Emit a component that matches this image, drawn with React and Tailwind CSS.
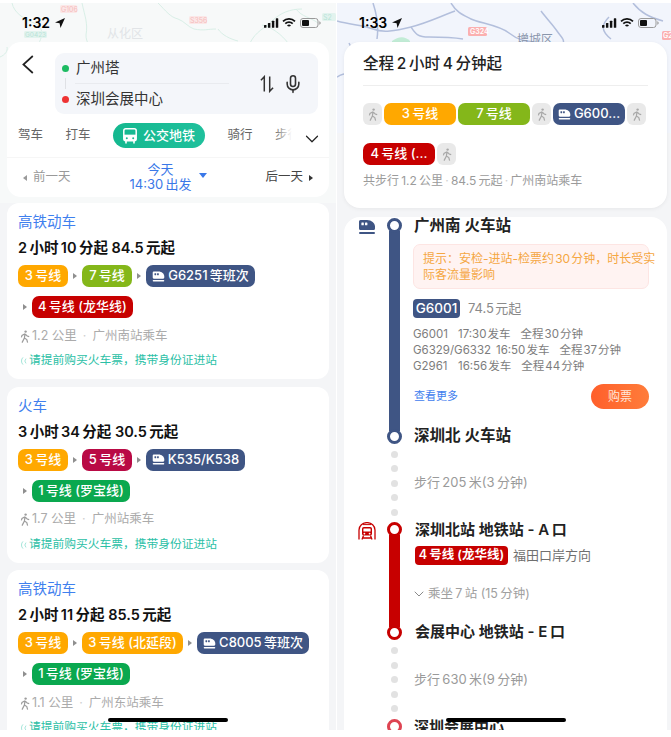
import { ChevronDown, Mic } from 'lucide-react'

const FONT = 'font-["Inter","Noto_Sans_CJK_SC",sans-serif]'

const ORANGE = 'bg-[#ffa800]'
const LIME = 'bg-[#84b71a]'
const NAVY = 'bg-[#3f5584]'
const RED = 'bg-[#c70000]'
const GREEN = 'bg-[#0aa84f]'
const CRIMSON = 'bg-[#b90a45]'

const ROUTES = [
  {
    title: '高铁动车',
    summary: '2\u2009小时\u200910\u2009分起\u00a084.5\u2009元起',
    rows: [
      [
        { label: '3\u2009号线', color: ORANGE, width: 'w-[50px]' },
        { label: '7\u2009号线', color: LIME, width: 'w-[50px]' },
        { label: 'G6251\u2009等班次', color: NAVY, width: 'w-[109px]', train: true },
      ],
      [{ label: '4\u2009号线 (龙华线)', color: RED, width: 'w-[101px]' }],
    ],
    info: '1.2 公里',
    station: '广州南站乘车',
  },
  {
    title: '火车',
    summary: '3\u2009小时\u200934\u2009分起\u00a030.5\u2009元起',
    rows: [
      [
        { label: '3\u2009号线', color: ORANGE, width: 'w-[50px]' },
        { label: '5\u2009号线', color: CRIMSON, width: 'w-[50px]' },
        { label: 'K535/K538', color: NAVY, width: 'w-[99px]', train: true },
      ],
      [{ label: '1\u2009号线 (罗宝线)', color: GREEN, width: 'w-[98px]' }],
    ],
    info: '1.7 公里',
    station: '广州站乘车',
  },
  {
    title: '高铁动车',
    summary: '2\u2009小时\u200911\u2009分起\u00a085.5\u2009元起',
    rows: [
      [
        { label: '3\u2009号线', color: ORANGE, width: 'w-[50px]' },
        { label: '3\u2009号线 (北延段)', color: ORANGE, width: 'w-[101px]' },
        { label: 'C8005\u2009等班次', color: NAVY, width: 'w-[112px]', train: true },
      ],
      [{ label: '1\u2009号线 (罗宝线)', color: GREEN, width: 'w-[98px]' }],
    ],
    info: '1.1 公里',
    station: '广州东站乘车',
  },
]

const TRAINS = [
  { no: 'G6001', width: 'w-[35px]', dep: '17:30\u200a发车', total: '全程\u200a30\u200a分钟' },
  { no: 'G6329/G6332', width: 'w-[73px]', dep: '16:50\u200a发车', total: '全程\u200a37\u200a分钟' },
  { no: 'G2961', width: 'w-[35px]', dep: '16:56\u200a发车', total: '全程\u200a44\u200a分钟' },
]

function LocationArrow() {
  return (
    <svg width="10" height="10" viewBox="0 0 10 10" className="ml-[5px]">
      <path d="M10 0 0 4.4l4.6.9.9 4.7z" fill="#111" />
    </svg>
  )
}

function StatusBar({ time, rightPad }) {
  return (
    <div className={`relative z-10 flex h-[39px] items-center pl-[22px] ${rightPad}`}>
      <span className="text-[14px] font-semibold text-black">{time}</span>
      <LocationArrow />
      <div className="ml-auto flex items-center gap-[3px]">
        <svg width="15" height="10" viewBox="0 0 16 10" fill="#111">
          <rect x="0" y="7" width="2.6" height="3" rx=".6" />
          <rect x="4.2" y="5" width="2.6" height="5" rx=".6" />
          <rect x="8.4" y="2.5" width="2.6" height="7.5" rx=".6" />
          <rect x="12.6" y="0" width="2.6" height="10" rx=".6" />
        </svg>
        <svg width="14" height="10" viewBox="0 0 14 10" fill="none" stroke="#111" strokeWidth="1.7">
          <path d="M1 3.4a8.5 8.5 0 0 1 12 0" />
          <path d="M3.3 5.7a5.2 5.2 0 0 1 7.4 0" />
          <path d="M5.6 8a2 2 0 0 1 2.8 0" />
        </svg>
        <svg width="21" height="10" viewBox="0 0 21 10" className="ml-[1px]">
          <rect x=".5" y=".5" width="17.5" height="9" rx="2.5" fill="none" stroke="#9a9a9a" />
          <rect x="2" y="2" width="7" height="6" rx="1" fill="#111" />
          <path d="M19.3 3.2c.9.3 1.4 1 1.4 1.8s-.5 1.5-1.4 1.8z" fill="#9a9a9a" />
        </svg>
      </div>
    </div>
  )
}

function HomeBar({ position }) {
  return <div className={`absolute top-[715px] z-20 h-[4px] w-[120px] rounded-full bg-black ${position}`} />
}

function TrainIcon({ size = 13, color = 'white', windows = '#3f5584' }) {
  return (
    <svg width={size} height={size} viewBox="0 0 18 16" className="shrink-0">
      <path d="M1 2.5A1.5 1.5 0 0 1 2.5 1H9c4.5 0 8 3 8 6.6V9.5A1.5 1.5 0 0 1 15.5 11h-13A1.5 1.5 0 0 1 1 9.5z" fill={color} />
      <rect x="3.4" y="3.4" width="2.4" height="2.8" rx=".5" fill={windows} />
      <rect x="7" y="3.4" width="2.4" height="2.8" rx=".5" fill={windows} />
      <rect x="1" y="13" width="16" height="2" rx="1" fill={color} />
    </svg>
  )
}

function SubwayIcon() {
  return (
    <svg width="18" height="18" viewBox="0 0 18 18" fill="none" stroke="#c70000" strokeWidth="1.3">
      <path d="M1 17.5V8a8 7.4 0 0 1 16 0v9.5" />
      <path d="M5 2.6h8" strokeWidth="1" />
      <rect x="4" y="5" width="10" height="8.5" rx="1.8" fill="#c70000" stroke="none" />
      <rect x="5.4" y="6.4" width="7.2" height="3" rx=".5" fill="white" stroke="none" />
      <circle cx="6.4" cy="11.6" r=".9" fill="white" stroke="none" />
      <circle cx="11.6" cy="11.6" r=".9" fill="white" stroke="none" />
      <path d="M5.5 13.5 4 17.5M12.5 13.5l1.5 4M4.5 16h9" />
    </svg>
  )
}

function Walker({ color = '#a8a8a8', className = '' }) {
  return (
    <svg width="10" height="13" viewBox="0 0 10 13" fill="none" stroke={color} strokeWidth="1.2" className={className}>
      <circle cx="5.6" cy="1.6" r="1.2" fill={color} stroke="none" />
      <path d="M5 3.6 4.4 8 2 12.6M4.4 8l2.4 1.6.8 3M5 3.8 2 5.4l-.6 2M5 3.8 7.2 6l2 .6" />
    </svg>
  )
}

function BusIcon() {
  return (
    <svg width="14" height="16" viewBox="0 0 14 16" fill="none" className="shrink-0">
      <rect x=".8" y=".8" width="12.4" height="12" rx="2" stroke="white" strokeWidth="1.5" />
      <path d="M1 7.4h12" stroke="white" strokeWidth="1.5" />
      <rect x="1" y="7.4" width="12" height="5.4" fill="white" />
      <circle cx="3.8" cy="10.2" r="1" fill="#17b890" />
      <circle cx="10.2" cy="10.2" r="1" fill="#17b890" />
      <path d="M3 13v2.4M11 13v2.4" stroke="white" strokeWidth="1.6" />
    </svg>
  )
}

function Triangle({ dir = 'right', color = '#8f8f8f', size = 'mx-[5px]' }) {
  const d = dir === 'right' ? 'M0 0 4 3 0 6z' : 'M4 0 0 3l4 3z'
  return (
    <svg width="4" height="6" viewBox="0 0 4 6" className={`shrink-0 ${size}`}>
      <path d={d} fill={color} />
    </svg>
  )
}

function LinePill({ label, color, width, train }) {
  return (
    <div className={`flex h-[22px] items-center justify-center gap-[3px] rounded-[7px] text-[13px] font-medium text-white ${color} ${width}`}>
      {train && <TrainIcon />}
      <span className="whitespace-nowrap">{label}</span>
    </div>
  )
}

function RouteCard({ route }) {
  return (
    <div className="rounded-[12px] bg-white px-[11px] pb-[9px] pt-[9px]">
      <div className="h-[20px] text-[14.5px] leading-[20px] text-[#3f80ee]">{route.title}</div>
      <div className="mt-[6px] h-[20px] text-[14.5px] font-semibold leading-[20px] text-[#111]">{route.summary}</div>
      <div className="mt-[7px] flex flex-col gap-[9px]">
        {route.rows.map((row, r) => (
          <div key={r} className="flex items-center">
            {row.map((pill, i) => (
              <div key={pill.label} className="flex items-center">
                {(i > 0 || r > 0) && <Triangle />}
                <LinePill {...pill} />
              </div>
            ))}
          </div>
        ))}
      </div>
      <div className="mt-[9px] flex h-[18px] items-center pl-[2px] text-[12.5px] text-[#ababab]">
        <Walker color="#9c9c9c" />
        <span className="ml-[2px]">{route.info}</span>
        <span className="mx-[6px] text-[#cfcfcf]">·</span>
        <span>{route.station}</span>
      </div>
      <div className="mt-[7px] flex h-[18px] items-center text-[11.75px] text-[#2cbfa6]">
        <svg width="10" height="10" viewBox="0 0 10 10" fill="none" stroke="#a6e6da" strokeWidth="1" className="mr-px">
          <path d="M5 1.4a5 5 0 0 0 0 7.2M8 2.6a3.4 3.4 0 0 0 0 4.8" />
        </svg>
        请提前购买火车票，携带身份证进站
      </div>
    </div>
  )
}

function LeftMap() {
  return (
    <svg width="336" height="200" viewBox="0 0 336 200" fill="none" className="absolute left-0 top-0">
      <g stroke="#d9efe7" strokeWidth="1">
        <path d="M12 0c2 10 12 16 22 20s10 14 2 24" />
        <path d="M82 0c3 14 6 20 4 32 0 8 4 10 6 14" />
        <path d="M158 0c8 8 12 14 20 16 6 2 10 8 16 10 10 2 14 0 22 0M218 26c4 6 12 10 20 12" />
        <path d="M250 40c6-12 14-14 22-22s18-12 30-12M296 6c6 8 14 8 22 14M262 22c10 2 20 10 26 18" />
        <path d="M0 54c5-2 8-6 7-10" />
      </g>
      <rect x="60" y="2" width="17" height="8" rx="1.5" fill="#fbe7e7" />
      <text x="61" y="9" fontSize="7" fill="#f5bdbd">G106</text>
      <rect x="189" y="13" width="18" height="8" rx="1.5" fill="#fbe7e7" />
      <text x="190" y="20" fontSize="7" fill="#f5bdbd">S356</text>
      <rect x="24" y="28" width="23" height="7" rx="1.5" fill="#e2f3ee" />
      <text x="25" y="34" fontSize="6.5" fill="#b9e3d8">G0423</text>
      <text x="107" y="35" fontSize="12" fill="#e1e4e7">从化区</text>
      <rect x="322" y="10" width="14" height="8" rx="1.5" fill="#e2f3ee" />
      <text x="323" y="17" fontSize="7" fill="#b9e3d8">S2</text>
    </svg>
  )
}

function RightMap() {
  return (
    <svg width="334" height="220" viewBox="0 0 334 220" fill="none" className="absolute left-0 top-0">
      <g stroke="#b3bfdc" strokeWidth="1.5">
        <path d="M0 18c14 4 26 4 36 8s22 2 38-2 28-10 44-16" />
        <path d="M36 0c4 12 6 22 4 36M74 24c4 6 6 10 18 10s22 0 34 2" />
        <path d="M114 0c6 10 12 12 20 16s28 6 38 14 16 8 36 10" />
        <path d="M204 8c6 8 12 14 16 20s8 8 6 14M272 14c-8 8-8 14 2 22M296 0c8 10 16 14 30 18" />
        <path d="M12 40c8 14 2 30 0 46M0 74c10-6 18-4 24 2" />
      </g>
      <path d="M55 38c6-4 12-6 18 0v6H55z" fill="#c2ecd6" />
      <rect x="131" y="24" width="19" height="9" rx="1.5" fill="#fbb0b0" />
      <text x="133" y="31" fontSize="7" fontWeight="600" fill="white">G324</text>
      <text x="180" y="41" fontSize="12" fill="#8a96ac">增城区</text>
      <rect x="325" y="28" width="9" height="9" rx="1.5" fill="#fbb0b0" />
      <text x="326" y="35" fontSize="7" fontWeight="600" fill="white">G2</text>
    </svg>
  )
}

function LeftPhone() {
  return (
    <div className="relative h-[727px] w-[336px] shrink-0 overflow-hidden bg-[#f4f5f7]">
      <div className="absolute inset-x-0 top-0 h-[200px] bg-[#f7f9f9]" />
      <LeftMap />
      <StatusBar time="1:32" rightPad="pr-[15px]" />
      <div className="relative flex flex-col px-[7px]">
        <div className="mb-[6px] flex h-[155px] flex-col rounded-[14px] bg-white">
          <div className="flex items-start pl-[15px] pt-[11px]">
            <svg width="12" height="19" viewBox="0 0 12 19" fill="none" stroke="#222" strokeWidth="1.7" className="mt-[2px] w-[12px] shrink-0">
              <path d="M10.8 1 1.4 9.5l9.4 8.5" />
            </svg>
            <div className="relative ml-[21px] flex h-[61px] w-[263px] rounded-[9px] bg-[#f4f6fa]">
              <div className="flex w-[174px] flex-col text-[14.5px] text-[#333]">
                <div className="flex h-[30px] items-center pl-[7px]">
                  <span className="mr-[7px] h-[7px] w-[7px] rounded-full bg-[#1dbb62]" />
                  广州塔
                </div>
                <div className="ml-[20px] h-px bg-[#e9ebef]" />
                <div className="flex h-[30px] items-center pl-[7px]">
                  <span className="mr-[7px] h-[7px] w-[7px] rounded-full bg-[#ee3333]" />
                  深圳会展中心
                </div>
              </div>
              <div className="absolute left-[10px] top-[25px] h-[11px] w-px bg-[#dfe1e5]" />
              <div className="ml-auto flex items-center gap-[9px] pr-[15px]">
                <svg width="14" height="18" viewBox="0 0 15 18" fill="none" stroke="#333" strokeWidth="1.6">
                  <path d="M1 5 4.6 1.2V17" />
                  <path d="M10.4 1v15.8L14 13" />
                </svg>
                <Mic size={20} strokeWidth={1.9} color="#333" />
              </div>
            </div>
          </div>
          <div className="mt-[9px] flex h-[25px] items-center">
            <div className="relative flex h-full w-[285px] items-center gap-[22.5px] overflow-hidden pl-[11px] text-[12.5px] text-[#666]">
              <span className="shrink-0">驾车</span>
              <span className="shrink-0">打车</span>
              <div className="flex h-full w-[92px] shrink-0 items-center justify-center gap-[6px] rounded-full bg-gradient-to-r from-[#14b88f] to-[#1fc09c] text-[13px] font-medium text-white">
                <BusIcon />
                公交地铁
              </div>
              <span className="shrink-0">骑行</span>
              <span className="shrink-0">步行</span>
              <div className="absolute right-0 top-0 h-full w-[18px] bg-gradient-to-r from-transparent to-white" />
            </div>
            <ChevronDown size={22} strokeWidth={1.3} color="#222" className="ml-[9px] mt-[6px]" />
          </div>
          <div className="mt-[9px] h-px bg-[#f6f6f6]" />
          <div className="flex flex-1 items-center">
            <div className="flex w-[100px] items-center pl-[16px] text-[12.5px] text-[#999]">
              <Triangle dir="left" color="#9a9a9a" size="mr-[6px]" />
              前一天
            </div>
            <div className="-mt-px flex flex-1 items-center justify-center">
              <div className="flex flex-col items-center text-[13px] leading-[15px] text-[#3a78e8]">
                <span>今天</span>
                <span className="whitespace-nowrap">14:30{'\u2009'}出发</span>
              </div>
              <svg width="8" height="5" viewBox="0 0 8 5" className="ml-[7px] -mt-[4px]">
                <path d="M0 0h8L4 5z" fill="#3a78e8" />
              </svg>
            </div>
            <div className="flex w-[100px] items-center justify-end pr-[16px] text-[12.5px] text-[#444]">
              后一天
              <Triangle color="#333" size="ml-[6px]" />
            </div>
          </div>
        </div>
        <div className="flex flex-col gap-[7.5px]">
          {ROUTES.map((route, i) => (
            <RouteCard key={i} route={route} />
          ))}
        </div>
      </div>
      <HomeBar position="left-[108px]" />
    </div>
  )
}

function Rail({ children }) {
  return <div className="flex w-[15px] shrink-0 flex-col items-center">{children}</div>
}

function Ring({ border }) {
  return <div className={`relative z-10 h-[15px] w-[15px] shrink-0 rounded-full border-[3px] bg-white ${border}`} />
}

function WalkSegment({ label, height }) {
  return (
    <div className={`flex ${height}`}>
      <div className="w-[29px] shrink-0" />
      <Rail>
        <div className="flex h-full flex-col justify-center gap-[7.5px]">
          {[0, 1, 2, 3, 4].map((d) => (
            <div key={d} className="h-[7px] w-[7px] rounded-full bg-[#e2e2e2]" />
          ))}
        </div>
      </Rail>
      <div className="ml-[12px] flex items-center text-[13px] text-[#9a9a9a]">{label}</div>
    </div>
  )
}

function WalkTile() {
  return (
    <div className="flex h-[22px] w-[19px] items-center justify-center rounded-[6px] bg-[#e9e9e9]">
      <Walker />
    </div>
  )
}

function RightPhone() {
  return (
    <div className="relative h-[727px] w-[334px] shrink-0 overflow-hidden bg-[#f4f5f7]">
      <div className="absolute inset-x-0 top-0 h-[130px] bg-[#f2f5fc]" />
      <RightMap />
      <StatusBar time="1:33" rightPad="pr-[12px]" />
      <div className="relative flex flex-col gap-[9px] pl-[7px] pr-[4px]">
        <div className="h-[166px] rounded-[16px] bg-white px-[19px] pt-[12px] shadow-[0_1px_4px_rgba(0,0,0,0.06)]">
          <div className="h-[20px] text-[15.5px] font-medium leading-[20px] text-[#222]">
            全程{'\u2009'}2{'\u2009'}小时{'\u2009'}4{'\u2009'}分钟起
          </div>
          <div className="mt-[11px] h-px bg-[#eeeeee]" />
          <div className="mt-[17px] flex flex-wrap gap-x-[2px] gap-y-[18px]">
            <WalkTile />
            <LinePill label={'3\u2009号线'} color={ORANGE} width="w-[72px]" />
            <LinePill label={'7\u2009号线'} color={LIME} width="w-[72px]" />
            <WalkTile />
            <LinePill label="G600..." color={NAVY} width="w-[72px]" train />
            <WalkTile />
            <LinePill label={'4\u2009号线 (...'} color={RED} width="w-[72px]" />
            <WalkTile />
          </div>
          <div className="mt-[7px] h-[18px] text-[12px] leading-[18px] text-[#9b9b9b]">
            共步行{'\u2009'}1.2{'\u2009'}公里{'\u2009'}<span className="text-[#cfcfcf]">·</span>{'\u2009'}84.5{'\u2009'}元起{'\u2009'}<span className="text-[#cfcfcf]">·</span>{'\u2009'}广州南站乘车
          </div>
        </div>

        <div className="h-[520px] overflow-hidden rounded-t-[16px] bg-white pl-[14px] pt-px">
          {/* train leg */}
          <div className="flex">
            <div className="w-[29px] shrink-0">
              <TrainIcon size={18} color="#3f5584" windows="white" />
            </div>
            <Rail>
              <Ring border="border-[#3f5584]" />
              <div className="-my-[2px] w-[11px] flex-1 bg-[#3f5584]" />
              <Ring border="border-[#3f5584]" />
            </Rail>
            <div className="ml-[11px] w-[236px]">
              <div className="pl-px text-[15.5px] font-semibold leading-[16px] text-[#222]">广州南 火车站</div>
              <div className="mt-[10px] flex h-[45px] flex-col justify-center whitespace-nowrap rounded-[7px] border border-[#fde5e3] bg-[#fff3f2] px-[9px] text-[12px] leading-[16px] text-[#f5a742]">
                <span>提示：安检-进站-检票约{'\u200a'}30{'\u200a'}分钟，时长受实</span>
                <span>际客流量影响</span>
              </div>
              <div className="mt-[10px] flex h-[19px] items-center">
                <span className="flex h-full w-[47px] items-center justify-center rounded-[4px] bg-[#3f5584] text-[13.5px] font-medium text-white">G6001</span>
                <span className="ml-[8px] text-[13px] text-[#8a8a8a]">74.5{'\u200a'}元起</span>
              </div>
              <div className="mt-[8px] flex flex-col text-[11.5px] leading-[16px] text-[#7d7d7d]">
                {TRAINS.map((t) => (
                  <div key={t.no} className="flex gap-[10px] whitespace-nowrap">
                    <span className={t.width}>{t.no}</span>
                    <span>{t.dep}</span>
                    <span>{t.total}</span>
                  </div>
                ))}
              </div>
              <div className="mt-[10px] flex h-[25px] items-center justify-between">
                <span className="pl-px text-[11px] text-[#3f80ee]">查看更多</span>
                <span className="flex h-full w-[58px] items-center justify-center rounded-full bg-gradient-to-r from-[#ff5f2b] to-[#ff7c3a] text-[12px] text-[#ffe6da]">购票</span>
              </div>
              <div className="mt-[19px] pl-px text-[15.5px] font-semibold leading-[16px] text-[#222]">深圳北 火车站</div>
            </div>
          </div>

          <WalkSegment label={'步行\u2009205\u2009米(3\u2009分钟)'} height="h-[78px]" />

          {/* metro leg */}
          <div className="flex">
            <div className="w-[29px] shrink-0">
              <SubwayIcon />
            </div>
            <Rail>
              <Ring border="border-[#c70000]" />
              <div className="-my-[2px] w-[11px] flex-1 bg-[#c70000]" />
              <Ring border="border-[#c70000]" />
            </Rail>
            <div className="ml-[13px]">
              <div className="text-[15px] font-semibold leading-[16px] text-[#222]">深圳北站 地铁站 - A{'\u2009'}口</div>
              <div className="mt-[8px] flex h-[19px] items-center">
                <span className="flex h-full w-[93px] items-center justify-center rounded-[4px] bg-[#c70000] text-[12.5px] font-semibold text-white">4{'\u2009'}号线 (龙华线)</span>
                <span className="ml-[5px] text-[13px] text-[#6f6f6f]">福田口岸方向</span>
              </div>
              <div className="mt-[20px] flex h-[18px] items-center text-[12.5px] text-[#a0a0a0]">
                <ChevronDown size={16} strokeWidth={1.5} color="#8a8a8a" className="-ml-[4px] mr-px" />
                乘坐{'\u2009'}7{'\u2009'}站 (15{'\u2009'}分钟)
              </div>
              <div className="mt-[21px] text-[15px] font-semibold leading-[16px] text-[#222]">会展中心 地铁站 - E{'\u2009'}口</div>
            </div>
          </div>

          <WalkSegment label={'步行\u2009630\u2009米(9\u2009分钟)'} height="h-[79px]" />

          <div className="flex">
            <div className="w-[29px] shrink-0" />
            <Rail>
              <Ring border="border-[#de4452]" />
            </Rail>
            <div className="ml-[12px] text-[15px] font-semibold leading-[16px] text-[#222]">深圳会展中心</div>
          </div>
        </div>
      </div>
      <HomeBar position="left-[109px]" />
    </div>
  )
}

export default function App() {
  return (
    <div className={`flex h-[737px] w-[671px] items-start gap-px overflow-hidden bg-white pt-[3px] ${FONT}`}>
      <LeftPhone />
      <RightPhone />
    </div>
  )
}
